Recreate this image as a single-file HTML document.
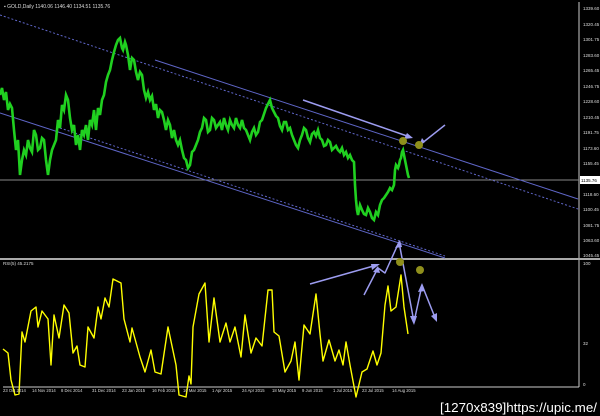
<!DOCTYPE html>
<html><head><meta charset="utf-8"><style>
html,body{margin:0;padding:0;background:#000;width:600px;height:416px;overflow:hidden}
svg text{font-family:"Liberation Sans",sans-serif}
</style></head><body>
<svg width="600" height="416" viewBox="0 0 600 416" xmlns="http://www.w3.org/2000/svg">
<rect width="600" height="416" fill="#000"/>
<line x1="579" y1="2" x2="579" y2="387" stroke="#ccc" stroke-width="1"/>
<line x1="0" y1="259" x2="600" y2="259" stroke="#aaa" stroke-width="2"/>
<line x1="3" y1="387" x2="579" y2="387" stroke="#ccc" stroke-width="1"/>
<line x1="0" y1="180" x2="579" y2="180" stroke="#888" stroke-width="1"/>
<g fill="#ddd" font-size="4.5">
<text x="583" y="10">1339.60</text><text x="583" y="26">1320.45</text><text x="583" y="41">1301.75</text>
<text x="583" y="57">1283.60</text><text x="583" y="72">1265.45</text><text x="583" y="88">1246.75</text>
<text x="583" y="103">1228.60</text><text x="583" y="119">1210.45</text><text x="583" y="134">1191.75</text>
<text x="583" y="150">1173.60</text><text x="583" y="165">1155.45</text>
<text x="583" y="196">1118.60</text><text x="583" y="211">1100.45</text><text x="583" y="227">1081.75</text>
<text x="583" y="242">1063.60</text><text x="583" y="257">1045.45</text>
<text x="583" y="265">100</text><text x="583" y="345">32</text><text x="583" y="386">0</text>
</g>
<rect x="580" y="176" width="20" height="8" fill="#fff"/>
<text x="581" y="182" font-size="4.5" fill="#000">1135.76</text>
<text x="4" y="8" font-size="5" fill="#ddd">▪ GOLD,Daily  1140.06 1146.40 1134.51 1135.76</text>
<text x="3" y="265" font-size="4.5" fill="#ddd">RSI(5) 45.2175</text>
<g stroke="#5f66c8" stroke-width="1" fill="none">
<line x1="155" y1="60" x2="578" y2="199"/>
<line x1="0" y1="15" x2="578" y2="209" stroke-dasharray="2,2"/>
<line x1="0" y1="113" x2="445" y2="258"/>
<line x1="60" y1="128" x2="445" y2="256" stroke-dasharray="2,2"/>
</g>
<polyline fill="none" stroke="#20d020" stroke-width="2.6" stroke-linejoin="miter" points="0,95 2,88 4,100 6,92 8,110 10,104 12,108 14,130 16,150 18,140 20,175 22,160 24,150 26,155 28,140 30,148 32,152 34,130 36,135 38,150 40,148 42,138 44,140 46,160 48,175 50,160 52,150 54,145 56,140 58,120 60,128 62,105 64,110 66,95 68,100 70,118 72,130 74,125 76,145 78,135 80,150 82,130 84,135 86,125 88,140 90,120 92,125 94,110 96,130 98,108 100,115 102,100 104,95 106,82 108,75 110,70 112,60 114,52 116,45 118,40 120,38 122,48 123,50 125,42 126,45 128,55 130,70 132,58 134,60 136,72 138,80 140,72 142,75 144,90 146,98 148,92 150,100 152,96 154,110 156,104 158,118 160,110 162,112 164,120 166,130 168,120 170,125 172,138 174,130 176,140 178,145 180,140 182,150 184,158 186,160 188,168 190,165 192,152 194,150 196,145 198,140 200,132 202,128 204,118 206,120 208,132 210,130 212,118 214,120 216,128 218,125 220,122 222,130 224,118 226,125 228,130 230,120 232,125 234,128 236,118 238,125 240,128 242,120 244,128 246,130 248,135 250,140 252,132 254,128 256,135 258,132 260,122 262,120 264,114 266,108 268,104 270,100 272,108 274,112 276,116 278,118 280,126 282,130 284,122 286,122 288,130 290,128 292,135 294,140 296,145 298,148 300,140 302,135 304,128 306,130 308,138 310,142 312,134 314,132 316,136 318,130 320,138 322,140 324,146 326,145 328,140 330,142 332,150 334,148 336,146 338,150 340,152 342,148 344,155 346,152 348,158 350,155 352,160 354,162 355,185 356,200 357,210 358,215 360,205 362,210 364,214 366,215 368,208 370,212 372,218 374,220 376,212 378,215 380,205 382,200 384,198 386,195 388,192 390,188 392,190 394,185 395,170 396,165 398,168 399,165 400,160 401,158 402,152 403,150 404,155 405,160 406,165 407,170 408,175 409,178"/>
<polyline fill="none" stroke="#ffff00" stroke-width="1.4" stroke-linejoin="round" points="3,349 8,353 11,380 15,395 19,394 22,332 25,342 31,311 36,307 38,327 42,311 48,319 51,365 54,315 59,338 64,305 69,313 73,353 77,346 80,365 85,367 88,327 94,338 98,307 101,319 105,298 109,307 113,279 121,283 124,319 130,342 132,328 140,357 145,372 151,350 155,372 161,374 168,327 176,365 179,395 186,397 189,376 191,384 193,327 199,294 205,283 209,342 214,298 220,342 226,323 230,342 235,327 241,357 245,315 251,353 256,338 262,346 268,290 272,290 274,332 279,336 285,372 291,361 295,342 299,380 304,325 310,334 316,294 320,334 323,361 329,340 335,361 339,350 343,365 346,342 350,365 356,397 362,372 367,369 373,351 377,365 381,353 385,305 388,286 391,311 396,307 401,275 404,307 408,334"/>
<g stroke="#9c9cf0" stroke-width="1.5" fill="none" stroke-linejoin="round">
<line x1="303" y1="100" x2="410" y2="137"/>
<line x1="445" y1="125" x2="421" y2="144"/>
<line x1="310" y1="284" x2="377" y2="265"/>
<polyline points="364,295 378,268 385,273 399,242 414,322 422,285 436,320"/>
</g>
<g fill="#9c9cf0">
<polygon points="413,138 404,139 407,133"/>
<polygon points="419,146 422,138 425,142"/>
<polygon points="380,264 372,270 371,264"/>
<polygon points="378,266 373,272 380,273"/>
<polygon points="400,240 395,248 402,247"/>
<polygon points="414,325 410,316 417,316"/>
<polygon points="422,283 418,292 425,291"/>
<polygon points="437,322 431,316 437,313"/>
</g>
<g fill="#8f8f1c">
<circle cx="403" cy="141" r="4"/><circle cx="419" cy="145" r="4"/>
<circle cx="400" cy="262" r="4"/><circle cx="420" cy="270" r="4"/>
</g>
<g fill="#ddd" font-size="4.2">
<text x="3" y="392">23 Oct 2014</text><text x="32" y="392">14 Nov 2014</text><text x="61" y="392">8 Dec 2014</text>
<text x="92" y="392">31 Dec 2014</text><text x="122" y="392">23 Jan 2015</text><text x="152" y="392">16 Feb 2015</text>
<text x="183" y="392">10 Mar 2015</text><text x="212" y="392">1 Apr 2015</text><text x="242" y="392">24 Apr 2015</text>
<text x="272" y="392">18 May 2015</text><text x="302" y="392">9 Jun 2015</text><text x="333" y="392">1 Jul 2015</text>
<text x="362" y="392">23 Jul 2015</text><text x="392" y="392">14 Aug 2015</text>
</g>
<text x="597" y="412" font-size="13" fill="#fff" text-anchor="end" font-family="Liberation Sans Narrow, Liberation Sans, sans-serif" textLength="157" lengthAdjust="spacingAndGlyphs">[1270x839]https://upic.me/</text>
</svg>
</body></html>
